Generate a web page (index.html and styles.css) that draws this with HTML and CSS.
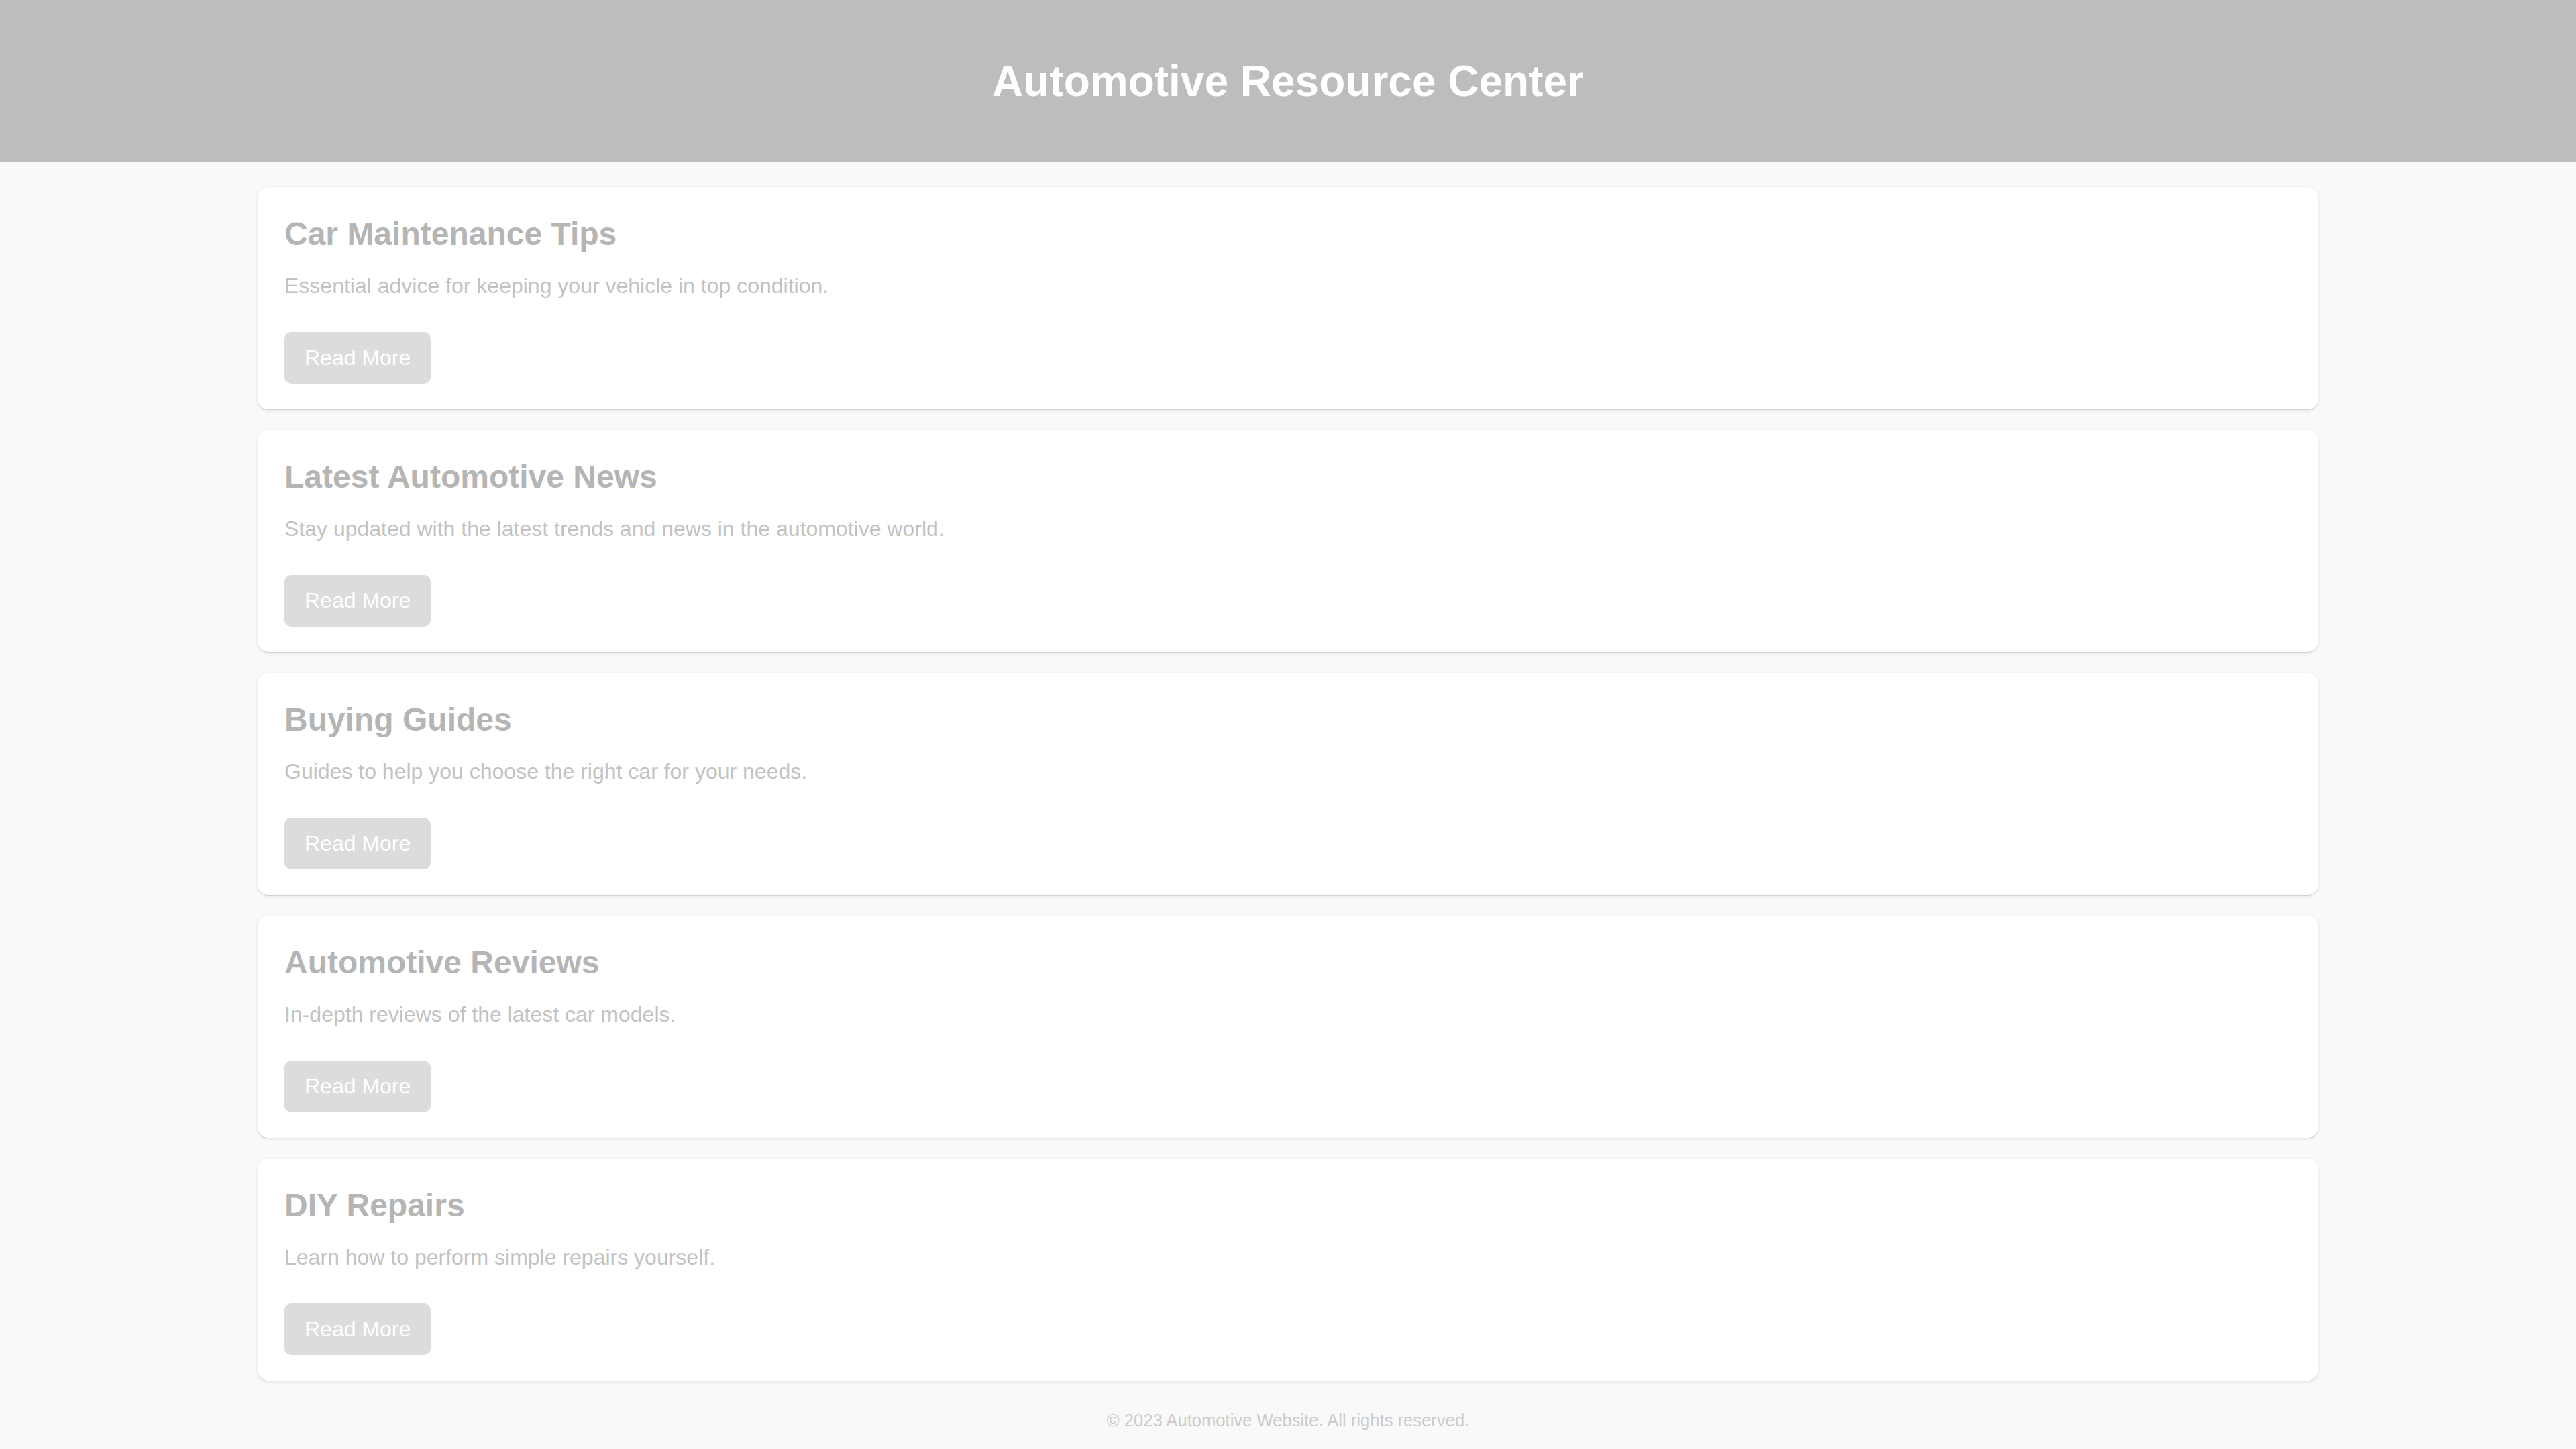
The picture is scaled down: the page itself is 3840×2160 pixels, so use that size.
FILE: index.html
```html
<!DOCTYPE html>
<html lang="en">
<head>
<meta charset="utf-8">
<title>Automotive Resource Center</title>
<link rel="stylesheet" href="styles.css">
</head>
<body>
<header class="site-header">
  <h1 class="site-title">Automotive Resource Center</h1>
</header>
<main class="content">
  <section class="card">
    <h2 class="card-title">Car Maintenance Tips</h2>
    <p class="card-text">Essential advice for keeping your vehicle in top condition.</p>
    <a class="btn" href="#">Read More</a>
  </section>
  <section class="card">
    <h2 class="card-title">Latest Automotive News</h2>
    <p class="card-text">Stay updated with the latest trends and news in the automotive world.</p>
    <a class="btn" href="#">Read More</a>
  </section>
  <section class="card">
    <h2 class="card-title">Buying Guides</h2>
    <p class="card-text">Guides to help you choose the right car for your needs.</p>
    <a class="btn" href="#">Read More</a>
  </section>
  <section class="card">
    <h2 class="card-title">Automotive Reviews</h2>
    <p class="card-text">In-depth reviews of the latest car models.</p>
    <a class="btn" href="#">Read More</a>
  </section>
  <section class="card">
    <h2 class="card-title">DIY Repairs</h2>
    <p class="card-text">Learn how to perform simple repairs yourself.</p>
    <a class="btn" href="#">Read More</a>
  </section>
</main>
<footer class="site-footer">
  <p class="footer-text">&copy; 2023 Automotive Website. All rights reserved.</p>
</footer>
</body>
</html>
```
FILE: styles.css
```css
html, body {
  margin: 0;
  padding: 0;
}
body {
  font-family: "Liberation Sans", Arial, sans-serif;
  font-size: 32px;
  background: #f9f9f9;
  color: #c4c4c4;
}
.site-header {
  background: #bdbdbd;
  padding: 40px 0;
  text-align: center;
}
.site-title {
  margin: 43.5px 0;
  font-size: 64px;
  font-weight: bold;
  color: #ffffff;
}
.content {
  width: 80%;
  margin: 0 auto;
  padding-top: 38px;
  display: flex;
  flex-direction: column;
  gap: 31px;
}
.card {
  background: #ffffff;
  border-radius: 16px;
  padding: 42px 40px 38px;
  box-shadow: 0 2px 6px rgba(0, 0, 0, 0.08), 0 1px 1px rgba(0, 0, 0, 0.12);
}
.card-title {
  margin: 0 0 32px;
  font-size: 48px;
  font-weight: bold;
  color: #b5b5b5;
}
.card-text {
  margin: 0 0 20px;
  font-size: 32px;
  color: #c2c2c2;
}
.btn {
  display: inline-block;
  margin-top: 30px;
  padding: 20px 30px;
  background: #dcdcdc;
  color: #ffffff;
  font-size: 32px;
  border-radius: 10px;
  text-decoration: none;
}
.site-footer {
  padding: 45px 0 40px;
  text-align: center;
}
.footer-text {
  margin: 0;
  font-size: 25.6px;
  color: #cbcbcb;
}
```
